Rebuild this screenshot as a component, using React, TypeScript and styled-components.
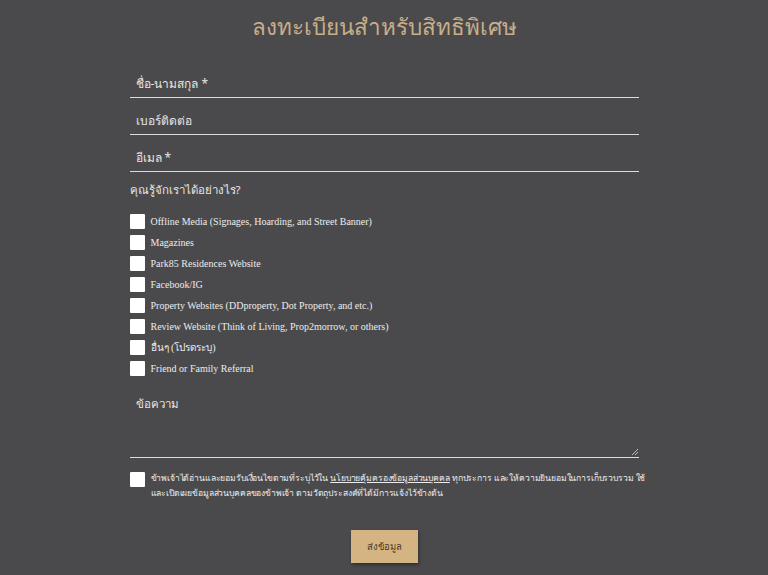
import React from 'react';
import styled, { createGlobalStyle } from 'styled-components';

const GlobalStyle = createGlobalStyle`
  html, body {
    margin: 0;
    padding: 0;
    background: #4a4a4c;
  }
  body {
    font-family: 'Noto Sans', 'Liberation Sans', sans-serif;
  }
`;

const Page = styled.div`
  width: 768px;
  min-height: 575px;
  background: #4a4a4c;
  display: flex;
  flex-direction: column;
  align-items: center;
  padding-top: 10px;
  box-sizing: border-box;
`;

const Title = styled.h1`
  margin: 0 0 27px;
  height: 34px;
  line-height: 34px;
  font-size: 22.5px;
  font-weight: 300;
  color: #c8ae89;
`;

const Form = styled.form`
  width: 509px;
  display: flex;
  flex-direction: column;
`;

const Field = styled.div`
  box-sizing: border-box;
  border-bottom: 1px solid #dcdcdc;
  padding: 0 0 1px 6px;
  height: 27px;
  margin-bottom: 10px;
  display: flex;
  align-items: center;
  color: #e6e6e6;
  font-size: 12px;
  line-height: 18px;
`;

const Question = styled.div`
  color: #e6e6e6;
  font-size: 11.5px;
  line-height: 18px;
  margin: -1px 0 15px;
`;

const OptionList = styled.div`
  display: flex;
  flex-direction: column;
  gap: 6px;
`;

const Option = styled.label`
  display: flex;
  align-items: center;
  gap: 6px;
  color: #ececec;
  font-family: 'Liberation Serif', serif;
  font-size: 10px;
  height: 15px;
`;

const Box = styled.span`
  width: 15px;
  height: 15px;
  background: #fff;
  border-radius: 1px;
  flex: none;
`;

const MessageArea = styled.div`
  position: relative;
  box-sizing: border-box;
  margin-top: 15px;
  height: 67px;
  border-bottom: 1px solid #dcdcdc;
  padding: 4px 0 0 6px;
  color: #e6e6e6;
  font-size: 11.5px;
  line-height: 18px;
`;

const Grip = styled.svg`
  position: absolute;
  right: 0;
  bottom: 1px;
`;

const Consent = styled.div`
  display: flex;
  align-items: flex-start;
  gap: 6px;
  margin-top: 14px;
  color: #ececec;
  font-size: 8.6px;
  line-height: 15px;
`;

const ConsentText = styled.div`
  margin-top: -1px;
  display: flex;
  flex-direction: column;
`;

const ConsentLine = styled.span`
  white-space: nowrap;
  letter-spacing: -0.15px;
`;

const Link = styled.span`
  text-decoration: underline;
`;

const Submit = styled.button`
  align-self: center;
  margin-top: 29px;
  width: 67px;
  height: 33px;
  border: none;
  background: #d4b482;
  color: #4a3a25;
  font-family: 'Noto Sans', sans-serif;
  font-size: 9.5px;
  box-shadow: 1px 2px 3px rgba(0, 0, 0, 0.35);
`;

const options = [
  'Offline Media (Signages, Hoarding, and Street Banner)',
  'Magazines',
  'Park85 Residences Website',
  'Facebook/IG',
  'Property Websites (DDproperty, Dot Property, and etc.)',
  'Review Website (Think of Living, Prop2morrow, or others)',
  'อื่นๆ (โปรดระบุ)',
  'Friend or Family Referral',
];

const App: React.FC = () => {
  return (
    <Page>
      <GlobalStyle />
      <Title>ลงทะเบียนสำหรับสิทธิพิเศษ</Title>
      <Form>
        <Field>ชื่อ-นามสกุล *</Field>
        <Field>เบอร์ติดต่อ</Field>
        <Field>อีเมล *</Field>
        <Question>คุณรู้จักเราได้อย่างไร?</Question>
        <OptionList>
          {options.map((o) => (
            <Option key={o}>
              <Box />
              {o}
            </Option>
          ))}
        </OptionList>
        <MessageArea>
          ข้อความ
          <Grip width="8" height="8" viewBox="0 0 8 8">
            <path d="M7 1L1 7M7 4L4 7" stroke="#bbb" strokeWidth="1" />
          </Grip>
        </MessageArea>
        <Consent>
          <Box />
          <ConsentText>
            <ConsentLine>
              ข้าพเจ้าได้อ่านและยอมรับเงื่อนไขตามที่ระบุไว้ใน <Link>นโยบายคุ้มครองข้อมูลส่วนบุคคล</Link> ทุกประการ
              และให้ความยินยอมในการเก็บรวบรวม ใช้
            </ConsentLine>
            <ConsentLine>
              และเปิดเผยข้อมูลส่วนบุคคลของข้าพเจ้า ตามวัตถุประสงค์ที่ได้มีการแจ้งไว้ข้างต้น
            </ConsentLine>
          </ConsentText>
        </Consent>
        <Submit type="button">ส่งข้อมูล</Submit>
      </Form>
    </Page>
  );
};

export default App;
